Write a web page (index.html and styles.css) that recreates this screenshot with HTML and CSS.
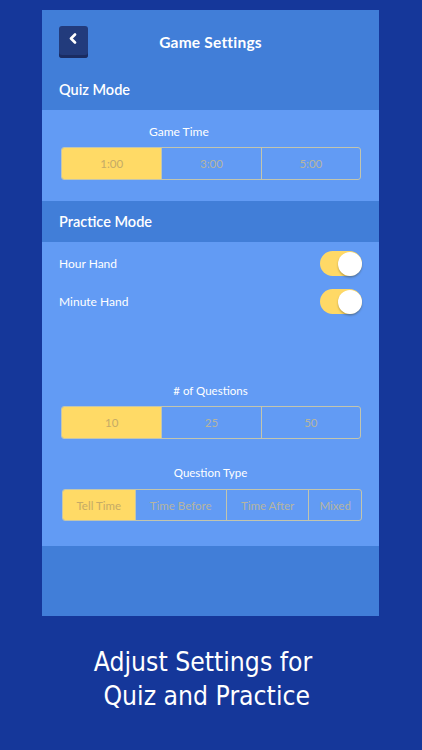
FILE: index.html
```html
<!DOCTYPE html>
<html lang="en">
<head>
<meta charset="utf-8">
<title>Game Settings</title>
<link rel="stylesheet" href="styles.css">
</head>
<body>
<div class="screen">
  <div class="panel">
    <div class="band band-top">
      <div class="topbar">
        <button class="back" aria-label="Back">
          <svg width="8" height="11" viewBox="0 0 8 11"><path d="M6 1.5 L2 5.5 L6 9.5" fill="none" stroke="#fff" stroke-width="2.6" stroke-linecap="round" stroke-linejoin="round"/></svg>
        </button>
        <h1 class="title">Game Settings</h1>
        <span></span>
      </div>
      <div class="sec-title">Quiz Mode</div>
    </div>
    <div class="light light-quiz">
      <div class="label label-game">Game Time</div>
      <div class="seg seg-three">
        <div class="opt on">1:00</div>
        <div class="opt">3:00</div>
        <div class="opt">5:00</div>
      </div>
    </div>
    <div class="band">
      <div class="sec-title">Practice Mode</div>
    </div>
    <div class="light light-practice">
      <div class="row"><span>Hour Hand</span><span class="toggle"></span></div>
      <div class="row row-2"><span>Minute Hand</span><span class="toggle"></span></div>
      <div class="label label-q">&#35; of Questions</div>
      <div class="seg seg-three">
        <div class="opt on">10</div>
        <div class="opt">25</div>
        <div class="opt">50</div>
      </div>
      <div class="label label-t">Question Type</div>
      <div class="seg seg-four">
        <div class="opt on">Tell Time</div>
        <div class="opt">Time Before</div>
        <div class="opt">Time After</div>
        <div class="opt">Mixed</div>
      </div>
    </div>
    <div class="band band-bottom"></div>
  </div>
  <p class="caption">Adjust Settings for<br>&nbsp;Quiz and Practice</p>
</div>
</body>
</html>
```
FILE: styles.css
```css
html, body {
  margin: 0;
  padding: 0;
}
body {
  background: #15379a;
  width: 422px;
  height: 750px;
  overflow: hidden;
  font-family: "Lato", "Noto Sans", sans-serif;
  color: #fff;
}
.screen {
  display: flex;
  flex-direction: column;
  padding-top: 10px;
}
.panel {
  margin-left: 42px;
  width: 337px;
  display: flex;
  flex-direction: column;
}
.band {
  background: #417ed8;
}
.band-top {
  padding-top: 16px;
  display: flex;
  flex-direction: column;
  gap: 11px;
}
.topbar {
  display: grid;
  grid-template-columns: 1fr auto 1fr;
  align-items: center;
  height: 32px;
  padding-left: 17px;
}
.back {
  width: 29px;
  height: 32px;
  border: 0;
  padding: 0 0 4px 0;
  border-radius: 3px;
  background: #223b7c;
  box-shadow: inset 0 -3px 0 #1a2c62;
  display: flex;
  align-items: center;
  justify-content: center;
}
.back svg {
  display: block;
  margin-left: -2px;
  margin-top: -3px;
}
.title {
  margin: 0 0 0 -17px;
  font-size: 15.5px;
  font-weight: 700;
  letter-spacing: 0.2px;
  line-height: 20px;
}
.sec-title {
  height: 41px;
  display: flex;
  align-items: center;
  padding-left: 17px;
  font-size: 14.5px;
  font-weight: 600;
}
.light {
  background: #629bf4;
  display: flex;
  flex-direction: column;
}
.light-quiz {
  padding: 14px 0 21px;
}
.light-practice {
  padding: 9px 0 25px;
}
.label {
  font-size: 11.5px;
  line-height: 16px;
  text-align: center;
  margin-bottom: 7px;
}
.label-game {
  text-align: left;
  padding-left: 107px;
  font-size: 12px;
}
.label-q {
  margin-top: 69px;
}
.label-t {
  margin-top: 26px;
  margin-bottom: 8px;
}
.seg {
  display: grid;
  margin: 0 18px 0 19px;
  height: 33px;
  box-sizing: border-box;
  border: 1px solid #c3c5ad;
  border-radius: 3px;
  overflow: hidden;
}
.seg-three {
  grid-template-columns: 1fr 1fr 1fr;
}
.seg-four {
  grid-template-columns: 72fr 92fr 83fr 53fr;
  margin: 0 17px 0 20px;
  height: 32px;
}
.opt {
  display: flex;
  align-items: center;
  justify-content: center;
  font-size: 11.5px;
  color: #b6b5a1;
  border-left: 1px solid #c3c5ad;
}
.opt:first-child {
  border-left: 0;
}
.opt.on {
  background: #ffda66;
  color: #c5ab66;
}
.row {
  display: flex;
  align-items: center;
  justify-content: space-between;
  height: 25px;
  padding: 0 17px 0 17px;
  font-size: 12px;
}
.row-2 {
  margin-top: 13px;
}
.toggle {
  position: relative;
  width: 42px;
  height: 25px;
  border-radius: 13px;
  background: #ffd966;
}
.toggle::after {
  content: "";
  position: absolute;
  top: 0.5px;
  right: 0.5px;
  width: 24px;
  height: 24px;
  border-radius: 50%;
  background: #fff;
  box-shadow: 0 1.5px 2px rgba(60, 50, 0, 0.35);
}
.band-bottom {
  height: 70px;
}
.caption {
  margin: 30px 0 0 0;
  padding-right: 16px;
  text-align: center;
  font-family: "DejaVu Sans Condensed", "DejaVu Sans", sans-serif;
  font-stretch: condensed;
  font-size: 26.3px;
  line-height: 33.5px;
  color: #fff;
}
```
